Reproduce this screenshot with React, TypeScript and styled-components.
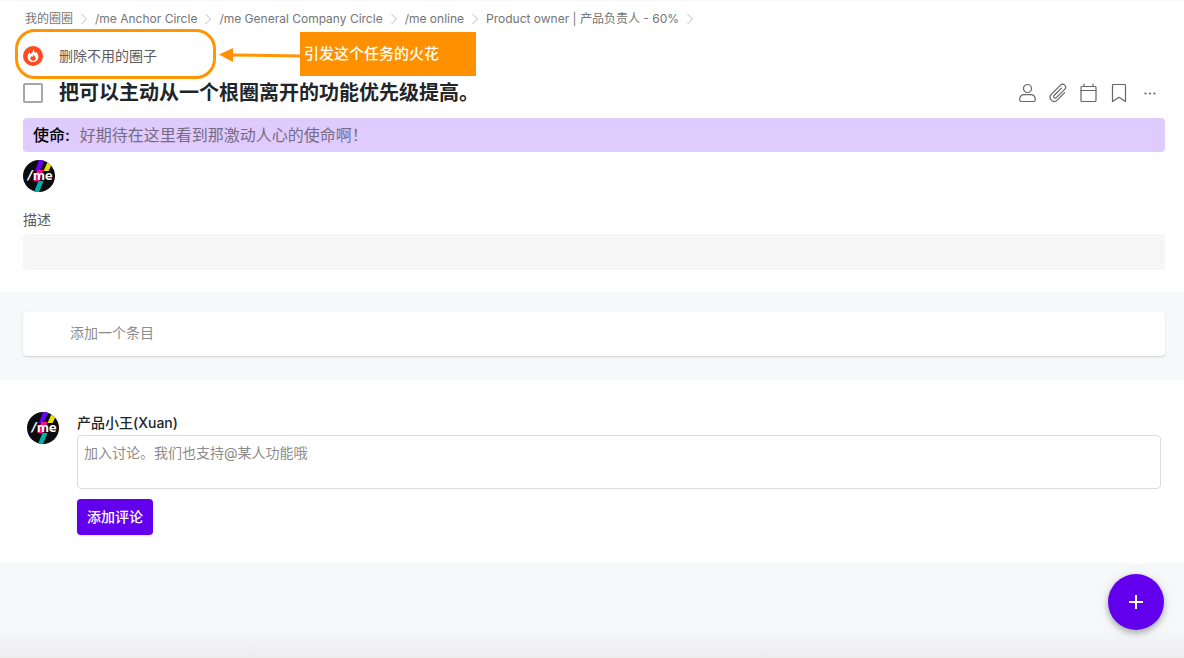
import React from 'react';
import styled, { createGlobalStyle } from 'styled-components';

const GlobalStyle = createGlobalStyle`
  *, *::before, *::after { box-sizing: border-box; }
  body {
    margin: 0;
    background: #f7f8fa;
    color: #212529;
    font-family: Inter, "Noto Sans CJK SC", sans-serif;
    font-size: 14px;
    line-height: 20px;
  }
  button, input, textarea { font: inherit; }
`;

const Page = styled.div`
  display: flex;
  flex-direction: column;
  min-height: 100vh;
  border-top: 1px solid #f8f8f9;
`;

const Section = styled.section<{ $padding: string; $muted?: boolean }>`
  padding: ${(p) => p.$padding};
  background: ${(p) => (p.$muted ? '#f7f8fa' : '#fff')};
`;

const Crumbs = styled.nav`
  display: flex;
  align-items: center;
  gap: 7px;
  height: 20px;
  padding-left: 2px;
  font-size: 12px;
`;

const Crumb = styled.a`
  color: #757575;
  text-decoration: none;
  white-space: nowrap;
`;

const Chevron = styled.svg`
  flex: none;
  width: 8px;
  height: 12px;
  fill: none;
  stroke: #bdbdbd;
`;

const SparkRow = styled.div`
  position: relative;
  display: flex;
  align-items: center;
  gap: 16px;
  height: 50px;
  padding-top: 4px;
`;

const SparkLink = styled.a`
  color: #5c5c5c;
  text-decoration: none;
`;

const Highlight = styled.div`
  position: absolute;
  left: -8px;
  top: 0;
  width: 201px;
  height: 50px;
  border: 3px solid #ff9500;
  border-radius: 20px;
  pointer-events: none;
`;

const Arrow = styled.svg`
  position: absolute;
  left: 196px;
  top: 17px;
`;

const Callout = styled.div`
  position: absolute;
  left: 277px;
  top: 3px;
  display: flex;
  align-items: center;
  width: 176px;
  height: 44px;
  padding-left: 4px;
  background: #ff9100;
  color: #fff;
  font-size: 15px;
  font-weight: 500;
`;

const TitleRow = styled.div`
  display: flex;
  align-items: center;
  gap: 16px;
  height: 28px;
`;

const Check = styled.input`
  appearance: none;
  flex: none;
  width: 20px;
  height: 20px;
  margin: 0;
  border: 2px solid #a6a6a6;
  border-radius: 2px;
  background: #fff;
`;

const Title = styled.h1`
  flex: 1;
  margin: 0;
  font-size: 20px;
  line-height: 28px;
  font-weight: 600;
`;

const Tools = styled.div`
  display: grid;
  grid-template-columns: repeat(5, 1fr);
  width: 153px;
`;

const Tool = styled.button`
  display: flex;
  justify-content: center;
  padding: 0;
  border: 0;
  background: none;
  color: #666;
  cursor: pointer;
`;

const Mission = styled.div`
  display: flex;
  align-items: center;
  gap: 10px;
  height: 34px;
  margin: 11px 0 8px;
  padding: 0 10px;
  border-radius: 4px;
  background: #dfcbfc;
  color: #766b86;
  font-size: 16px;
`;

const MissionLabel = styled.strong`
  color: #000;
  font-weight: 500;
`;

const Picture = styled.svg`
  display: block;
  flex: none;
  width: 32px;
  height: 32px;
`;

const FieldLabel = styled.label`
  display: block;
  margin: 18px 0 4px;
  color: #5c5c5c;
`;

const Description = styled.textarea`
  display: block;
  width: 100%;
  height: 36px;
  padding: 8px;
  border: 0;
  border-radius: 4px;
  background: #f6f6f6;
  resize: none;
`;

const ItemInput = styled.input`
  display: block;
  width: 100%;
  height: 44px;
  padding: 0 47px 4px;
  border: 0;
  border-radius: 4px;
  background: #fff;
  box-shadow: 0 1px 2px rgba(0, 0, 0, 0.16);
  &::placeholder { color: #8c8c8c; opacity: 1; }
`;

const Discussion = styled.form`
  display: flex;
  align-items: flex-start;
  gap: 18px;
`;

const Composer = styled.div`
  flex: 1;
  min-width: 0;
`;

const Author = styled.label`
  display: block;
  height: 23px;
  line-height: 22px;
  font-weight: 500;
`;

const Comment = styled.textarea`
  display: block;
  width: 100%;
  height: 54px;
  margin-bottom: 10px;
  padding: 7px 6px;
  border: 1px solid #dcdcdc;
  border-radius: 4px;
  resize: none;
  &::placeholder { color: #8c8c8c; opacity: 1; }
`;

const Submit = styled.button`
  display: block;
  height: 36px;
  padding: 0 10px;
  border: 0;
  border-radius: 4px;
  background: #6200ee;
  color: #fff;
  font-weight: 500;
  box-shadow: 0 1px 2px rgba(0, 0, 0, 0.12);
  cursor: pointer;
`;

const Footer = styled.footer`
  flex: 1;
  background: linear-gradient(to top, #ededee, #f7f8fa 30px);
`;

const AddButton = styled.button`
  position: fixed;
  right: 20px;
  bottom: 28px;
  display: flex;
  align-items: center;
  justify-content: center;
  width: 56px;
  height: 56px;
  padding: 0;
  border: 0;
  border-radius: 50%;
  background: #6200ee;
  box-shadow: 0 3px 6px rgba(0, 0, 0, 0.28), 0 2px 14px rgba(0, 0, 0, 0.1);
  cursor: pointer;
`;

const crumbs = [
  '我的圈圈',
  '/me Anchor Circle',
  '/me General Company Circle',
  '/me online',
  'Product owner | 产品负责人 - 60%',
];

const tools: { name: string; art: React.ReactNode }[] = [
  {
    name: '成员',
    art: (
      <>
        <circle cx="10.500" cy="5.500" r="4" />
        <path d="M2.700 16.800c0-3.300 1.800-5.100 4.600-5.100h6.400c2.800 0 4.600 1.800 4.600 5.100 0 1.100-.6 1.700-1.700 1.700H4.400c-1.100 0-1.700-.6-1.700-1.700z" />
      </>
    ),
  },
  {
    name: '附件',
    art: (
      <path d="M13.400 5.200l-7.300 7.300a1.500 1.500 0 0 0 2.200 2.200l8.400-8.400c2.800-2.900-1.300-7-4.200-4.200L3.500 11.200c-4.100 4.300 1.800 9.700 5.700 5.900l7.400-7.400" />
    ),
  },
  {
    name: '日期',
    art: (
      <>
        <rect x="3" y="3.500" width="15" height="15" rx="1" />
        <path d="M3 7.500h15M6 1v2.500M15 1v2.500" />
      </>
    ),
  },
  { name: '收藏', art: <path d="M3.500 2.300q0-.8.8-.8h11.400q.8 0 .8.8v16.200L10 14.300l-6.500 4.200z" /> },
  {
    name: '更多',
    art: (
      <g fill="currentColor" stroke="none">
        <circle cx="5.500" cy="10.500" r="1.100" />
        <circle cx="10" cy="10.500" r="1.100" />
        <circle cx="14.500" cy="10.500" r="1.100" />
      </g>
    ),
  },
];

function Avatar({ id }: { id: string }) {
  return (
    <Picture viewBox="0 0 32 32" role="img" aria-label="/me">
      <clipPath id={id}>
        <circle cx="16" cy="16" r="16" />
      </clipPath>
      <g clipPath={`url(#${id})`}>
        <rect width="32" height="32" fill="#0c0c10" />
        <path d="M16 0h5.500l-5 11H12z" fill="#6a00f4" />
        <path d="M25 1l4 3-3.500 7h-5z" fill="#e9e000" />
        <path d="M14.500 10h6l-4.500 11h-6z" fill="#f5127b" />
        <path d="M15.500 21h5l-4.500 11h-5z" fill="#00b2a9" />
        <text x="4" y="20" fill="#fff" fontFamily="Lato, sans-serif" fontSize="14" fontWeight="900">
          <tspan fontStyle="italic">/</tspan>me
        </text>
      </g>
    </Picture>
  );
}

function SparkIcon() {
  return (
    <svg width="20" height="20" viewBox="0 0 20 20" aria-hidden="true">
      <circle cx="10" cy="10" r="10" fill="#ff4a22" />
      <path
        d="M10.300 2.800c.3 2 1.500 3.200 2.200 4.500.4-.5.5-1 .5-1.600 1.500 1.500 2.400 3.200 2.400 5.100 0 3.200-2.300 5.300-5.400 5.300s-5.400-2.100-5.400-5.200c0-2 .9-3.700 2.300-4.900 0 1 .2 1.700.7 2.300 1.600-1.300 2.600-3.100 2.700-5.500z"
        fill="#fff"
      />
      <path d="M10.500 8.200c.1 1.500 2.200 2.200 2.200 4.200 0 1.500-1.100 2.400-2.600 2.400s-2.700-1-2.700-2.500c0-1 .5-1.700 1.100-2.300.2.600.5.900.8 1 .8-.7 1.200-1.600 1.200-2.800z" fill="#ff4a22" />
    </svg>
  );
}

export default function App() {
  return (
    <Page>
      <GlobalStyle />
      <Section $padding="8px 19px 22px 23px">
        <Crumbs aria-label="路径">
          {crumbs.map((name) => (
            <React.Fragment key={name}>
              <Crumb href="#">{name}</Crumb>
              <Chevron viewBox="0 0 8 12" aria-hidden="true">
                <path d="M1.500 1l5 5-5 5" />
              </Chevron>
            </React.Fragment>
          ))}
        </Crumbs>
        <SparkRow>
          <SparkIcon />
          <SparkLink href="#">删除不用的圈子</SparkLink>
          <Highlight />
          <Arrow width="82" height="18" viewBox="0 0 82 18" aria-hidden="true">
            <path d="M12 9l70 1" stroke="#ff9500" strokeWidth="3" />
            <path d="M0 8.500L14 2v14z" fill="#ff9100" />
          </Arrow>
          <Callout>引发这个任务的火花</Callout>
        </SparkRow>
        <TitleRow>
          <Check type="checkbox" aria-label="完成任务" />
          <Title>把可以主动从一个根圈离开的功能优先级提高。</Title>
          <Tools>
            {tools.map((tool) => (
              <Tool key={tool.name} type="button" aria-label={tool.name}>
                <svg width="20" height="20" viewBox="0 0 20 20" fill="none" stroke="currentColor" strokeWidth="1.2" strokeLinecap="round" strokeLinejoin="round">
                  {tool.art}
                </svg>
              </Tool>
            ))}
          </Tools>
        </TitleRow>
        <Mission>
          <MissionLabel>使命:</MissionLabel>
          <span>好期待在这里看到那激动人心的使命啊！</span>
        </Mission>
        <Avatar id="owner" />
        <FieldLabel htmlFor="description">描述</FieldLabel>
        <Description id="description" />
      </Section>
      <Section $muted $padding="20px 19px 24px 23px">
        <ItemInput aria-label="添加一个条目" placeholder="添加一个条目" />
      </Section>
      <Section $padding="32px 23px 28px 27px">
        <Discussion>
          <Avatar id="author" />
          <Composer>
            <Author htmlFor="comment">产品小王(Xuan)</Author>
            <Comment id="comment" placeholder="加入讨论。我们也支持@某人功能哦" />
            <Submit type="button">添加评论</Submit>
          </Composer>
        </Discussion>
      </Section>
      <Footer />
      <AddButton type="button" aria-label="新建">
        <svg width="14" height="14" viewBox="0 0 14 14" stroke="#fff" strokeWidth="2" aria-hidden="true">
          <path d="M7 0v14M0 7h14" />
        </svg>
      </AddButton>
    </Page>
  );
}
